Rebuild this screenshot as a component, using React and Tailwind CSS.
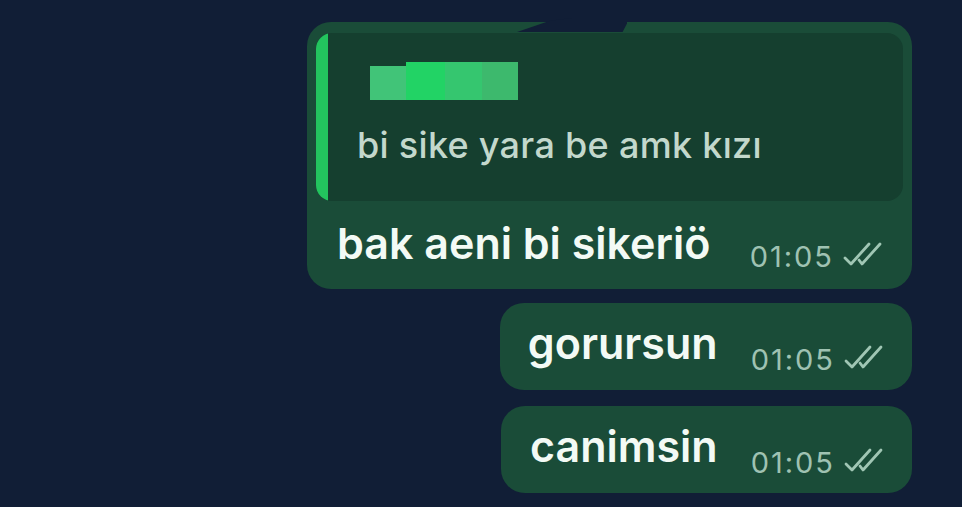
import React from "react";

function Checks() {
  return (
    <svg width="40" height="26" viewBox="0 0 40 26" fill="none" stroke="#a0c6b4" strokeWidth="2.8" strokeLinecap="round" strokeLinejoin="round">
      <path d="M3 17 L9 23 L27 3" />
      <path d="M17 19 L20 23 L38 3" />
    </svg>
  );
}

function Time() {
  return (
    <div className="flex items-start gap-[8px]">
      <span className="text-[29px] leading-none text-[#9fc2b2] tracking-[2px] font-normal">01:05</span>
      <div className="-mt-[1px]">
        <Checks />
      </div>
    </div>
  );
}

export default function App() {
  return (
    <div
      className="w-[962px] h-[507px] bg-[#111e36] flex flex-col items-end pr-[50px] pt-[22px] overflow-hidden"
      style={{ fontFamily: "Inter, 'Noto Sans', sans-serif" }}
    >
      <div className="relative w-[605px] h-[267px] bg-[#1a4c38] rounded-[24px] pt-[11px] px-[9px] flex flex-col">
        <div
          className="absolute left-[210px] -top-[4px] w-[110px] h-[14px] bg-[#111e36]"
          style={{ clipPath: "polygon(0 100%, 30% 20%, 50% 0, 100% 0, 100% 40%, 96% 100%)" }}
        />
        <div className="relative h-[168px] bg-[#153f2f] rounded-[16px] overflow-hidden flex">
          <div className="w-[12px] bg-[#23c45e]" />
          <div className="flex flex-col pl-[29px]">
            <div className="mt-[29px] ml-[13px] flex items-end h-[38px]">
              <div className="w-[36px] h-[34px] bg-[#41c478]" />
              <div className="w-[39px] h-[38px] bg-[#22d365]" />
              <div className="w-[37px] h-[38px] bg-[#35c66f]" />
              <div className="w-[36px] h-[38px] bg-[#3db96d]" />
            </div>
            <div className="mt-[27px] text-[36px] leading-none text-[#c3d8cc] font-medium tracking-[0.3px]">bi sike yara be amk kızı</div>
          </div>
        </div>
        <div className="flex justify-between items-start pl-[21px] pr-[21px] mt-[21px]">
          <span className="text-[43px] leading-none text-[#f3faf5] font-semibold">bak aeni bi sikeriö</span>
          <div className="mt-[20px]">
            <Time />
          </div>
        </div>
      </div>
      <div className="mt-[14px] h-[87px] bg-[#1a4c38] rounded-[24px] pl-[28px] pr-[29px] flex items-start">
        <span className="mt-[19px] text-[43px] leading-none text-[#f3faf5] font-semibold">gorursun</span>
        <div className="mt-[42px] ml-[33px]">
          <Time />
        </div>
      </div>
      <div className="mt-[16px] h-[87px] bg-[#1a4c38] rounded-[24px] pl-[29px] pr-[29px] flex items-start">
        <span className="mt-[19px] text-[43px] leading-none text-[#f3faf5] font-semibold">canimsin</span>
        <div className="mt-[42px] ml-[33px]">
          <Time />
        </div>
      </div>
    </div>
  );
}
